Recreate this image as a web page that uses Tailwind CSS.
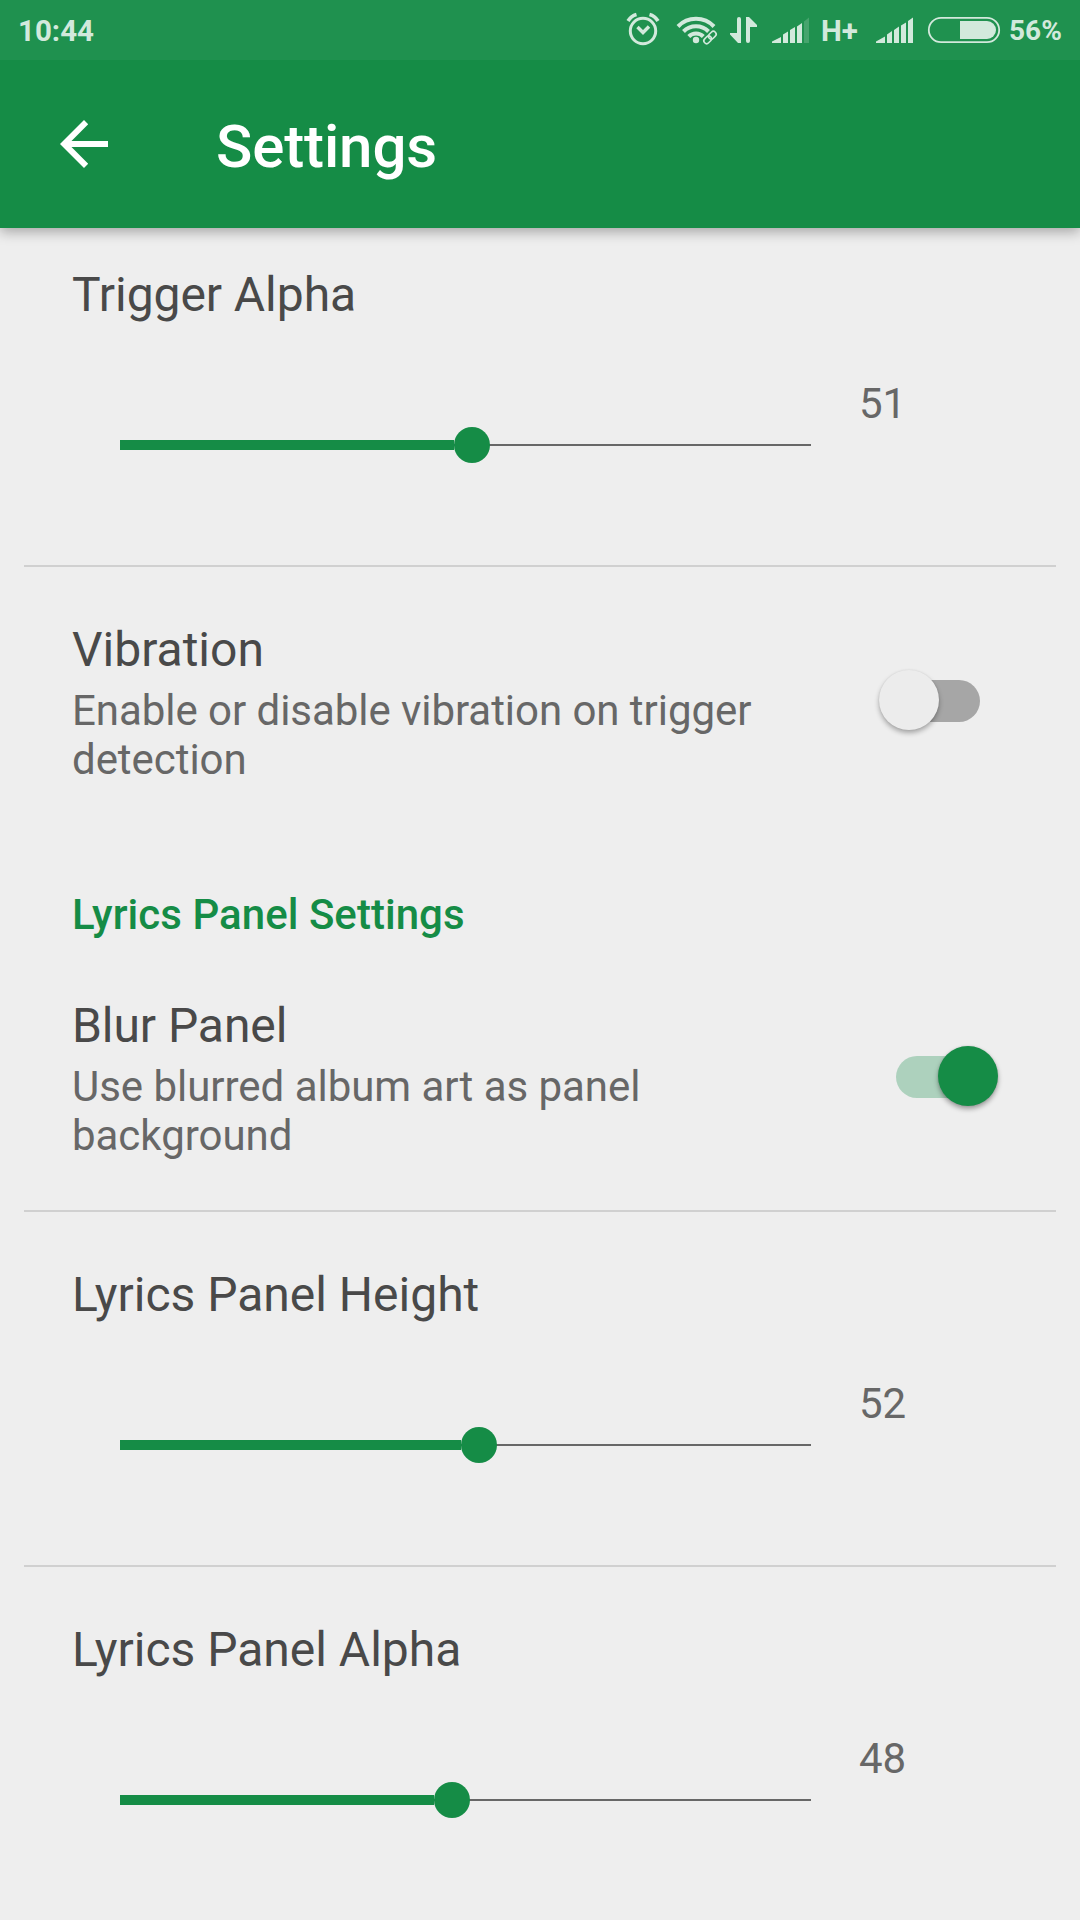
<!DOCTYPE html>
<html lang="en">

<head>
    <meta charset="UTF-8">
    <meta name="viewport" content="width=device-width, initial-scale=1.0">
    <title>Settings</title>
    <script src="https://cdn.jsdelivr.net/npm/@tailwindcss/browser@4"></script>
</head>

<body class="bg-[#eeeeee] font-[Roboto,sans-serif] h-[1920px] w-[1080px] overflow-hidden">
    <header class="relative z-10 bg-[#158c46] shadow-[0_4px_12px_rgba(0,0,0,0.3)]">
        <!-- status bar -->
        <div class="bg-[#1f914f] h-[60px] flex items-center justify-between pl-[18px] text-[#d2e9dc] font-bold text-[29.5px] leading-[34px]">
            <span class="pt-0.5">10:44</span>
            <svg class="w-[460px] h-[60px]" viewBox="620 0 460 60" fill="currentColor">
                <!-- alarm -->
                <g fill="none" stroke="currentColor" stroke-width="3">
                    <circle cx="643" cy="31" r="12.7" />
                    <path d="M637.5 27l5.5 5.500 6-6" stroke-width="3.400" />
                    <path d="M628 21q3-5 8.500-6.500M658 21q-3-5-8.500-6.500" stroke-width="3.600" />
                </g>
                <!-- wifi -->
                <g fill="none" stroke="currentColor" stroke-width="4">
                    <path d="M678 26.500a25 25 0 0 1 36 0" />
                    <path d="M683.500 31.500a17.500 17.500 0 0 1 25 0" />
                    <path d="M688.800 36.500a10 10 0 0 1 14.500 0" />
                </g>
                <circle cx="696" cy="40" r="3.200" />
                <g fill="none" stroke="currentColor" stroke-width="1.600" transform="rotate(-45 710 37.500)">
                    <rect x="702.500" y="34.700" width="8.500" height="5.600" rx="2.800" />
                    <rect x="709" y="34.700" width="8.500" height="5.600" rx="2.800" />
                </g>
                <!-- data arrows -->
                <path d="M737 19q0-2 2-2t2 2v24h-3l-8-8.500v-1.500h7z" />
                <path d="M746 17h3l8 8v2h-7v14q0 2-2 2t-2-2z" />
                <!-- first signal -->
                <path d="M772 43v-1.500l9-4.500v6zM783 34.500l5-3V43h-5zM790 30l5-3V43h-5zM797 26.500l5-3.500v20h-5z" />
                <path d="M804 21.500l5-4V43h-5z" opacity=".22" />
                <text x="821" y="40.500" class="font-bold text-[29.500px]">H+</text>
                <!-- second signal -->
                <path d="M876 43v-1.500l9-5v6.500zM887 34.500l5-3.500v12h-5zM894 30l5-3.500V43h-5zM901 25.500l5-3V43h-5zM908 21l5-3.500V43h-5z" />
                <!-- battery -->
                <rect x="928.800" y="17.800" width="70.400" height="24.400" rx="12.200" fill="none" stroke="currentColor" stroke-width="1.800" />
                <path d="M960 21h27a9 9 0 0 1 0 18h-27z" />
                <text x="1009" y="40" class="font-bold text-[28px]">56%</text>
            </svg>
        </div>
        <!-- app bar -->
        <div class="h-[168px] flex items-center pl-[60px]">
            <svg class="w-12 h-12" viewBox="0 0 48 48" fill="#fff">
                <path d="M48 21H11.500L28.200 4.200 24 0 0 24l24 24 4.200-4.200L11.500 27H48z" />
            </svg>
            <h1 class="ml-[108px] mt-1.5 text-white font-medium text-[60px] leading-[70px] tracking-[-0.12px]">Settings</h1>
        </div>
    </header>

    <main class="-mt-4">
        <section class="h-[355px] pt-[55px] relative">
            <h2 class="pl-[72px] text-[#494949] text-[48px] leading-[56px] tracking-[-0.06px]">Trigger Alpha</h2>
            <div class="flex pl-[120px] pt-14">
                <div class="relative w-[691px] h-[132px] flex items-center">
                    <div class="h-0.5 w-full bg-[#676767]"></div>
                    <div class="absolute left-0 h-2.5 bg-[#158c46]" style="width: 48.4%"></div>
                    <div class="absolute size-9 -ml-[18px] rounded-full bg-[#158c46]" style="left: 51%"></div>
                </div>
                <span class="pl-12 text-[#676767] text-[42px] leading-[49px]">51</span>
            </div>
            <hr class="absolute bottom-0 inset-x-6 border-t-2 border-[#d0d0d0]">
        </section>

        <section class="h-[267px] pt-[55px] pl-[72px] flex">
            <div class="w-[750px]">
                <h2 class="text-[#494949] text-[48px] leading-[56px]">Vibration</h2>
                <p class="mt-2 text-[#676767] text-[42px] leading-[49px] tracking-[-0.05px]">Enable or disable vibration on trigger<br>detection</p>
            </div>
            <div class="relative ml-[74px] mt-[58px] w-[84px] h-[42px] rounded-full bg-[#a6a6a6]">
                <div class="absolute -left-[17.5px] -top-[10.5px] size-[60px] rounded-full bg-[#ececec] shadow-[0_3px_5px_rgba(0,0,0,0.3),0_0_2px_rgba(0,0,0,0.08)]"></div>
            </div>
        </section>

        <h3 class="h-[109px] pt-14 pl-[72px] text-[#158c46] font-medium text-[42px] leading-[49px] tracking-[0.04px]">Lyrics Panel Settings</h3>

        <section class="h-[269px] pt-[55px] pl-[72px] flex relative">
            <div class="w-[750px]">
                <h2 class="text-[#494949] text-[48px] leading-[56px] tracking-[-0.06px]">Blur Panel</h2>
                <p class="mt-2 text-[#676767] text-[42px] leading-[49px] tracking-[-0.03px]">Use blurred album art as panel<br>background</p>
            </div>
            <div class="relative ml-[74px] mt-[58px] w-[84px] h-[42px] rounded-full bg-[#add1bd]">
                <div class="absolute left-[41.5px] -top-[10.5px] size-[60px] rounded-full bg-[#158c46] shadow-[0_3px_5px_rgba(0,0,0,0.35),0_0_2px_rgba(0,0,0,0.12)]"></div>
            </div>
            <hr class="absolute bottom-0 inset-x-6 border-t-2 border-[#d0d0d0]">
        </section>

        <section class="h-[355px] pt-[55px] relative">
            <h2 class="pl-[72px] text-[#494949] text-[48px] leading-[56px]">Lyrics Panel Height</h2>
            <div class="flex pl-[120px] pt-14">
                <div class="relative w-[691px] h-[132px] flex items-center">
                    <div class="h-0.5 w-full bg-[#676767]"></div>
                    <div class="absolute left-0 h-2.5 bg-[#158c46]" style="width: 49.4%"></div>
                    <div class="absolute size-9 -ml-[18px] rounded-full bg-[#158c46]" style="left: 52%"></div>
                </div>
                <span class="pl-12 text-[#676767] text-[42px] leading-[49px]">52</span>
            </div>
            <hr class="absolute bottom-0 inset-x-6 border-t-2 border-[#d0d0d0]">
        </section>

        <section class="h-[353px] pt-[55px]">
            <h2 class="pl-[72px] text-[#494949] text-[48px] leading-[56px]">Lyrics Panel Alpha</h2>
            <div class="flex pl-[120px] pt-14">
                <div class="relative w-[691px] h-[132px] flex items-center">
                    <div class="h-0.5 w-full bg-[#676767]"></div>
                    <div class="absolute left-0 h-2.5 bg-[#158c46]" style="width: 45.4%"></div>
                    <div class="absolute size-9 -ml-[18px] rounded-full bg-[#158c46]" style="left: 48%"></div>
                </div>
                <span class="pl-12 text-[#676767] text-[42px] leading-[49px]">48</span>
            </div>
        </section>
    </main>
</body>

</html>
